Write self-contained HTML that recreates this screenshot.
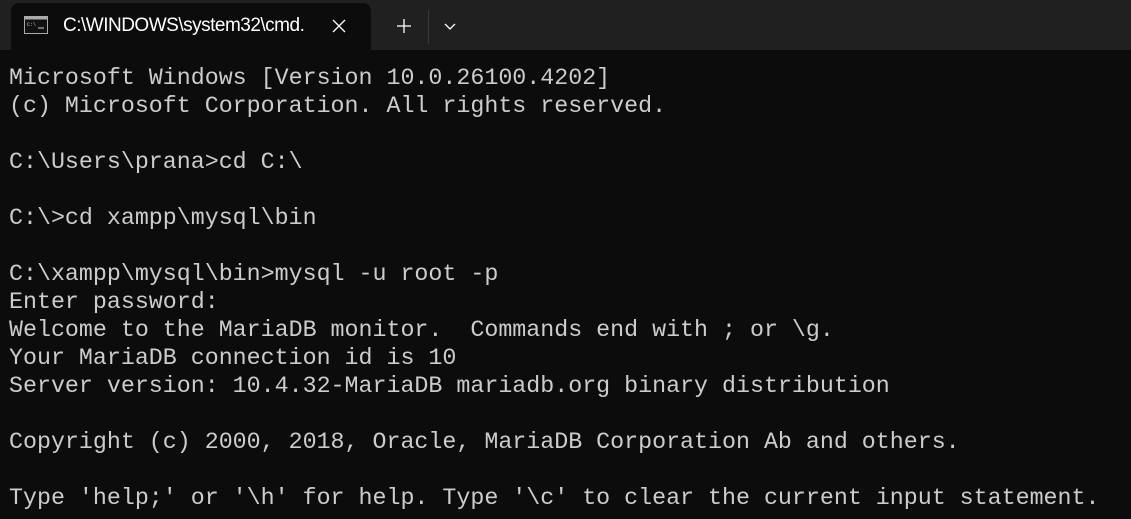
<!DOCTYPE html>
<html><head><style>
html,body{margin:0;padding:0;width:1131px;height:519px;overflow:hidden;background:#0c0c0c;}
.bar{position:absolute;left:0;top:0;width:1131px;height:50px;background:#202020;}
.tab{position:absolute;left:11px;top:3px;width:360px;height:47px;background:#0c0c0c;border-radius:8px 8px 0 0;}
.title{position:absolute;left:63px;top:15px;font:19px "Liberation Sans",sans-serif;color:#fff;letter-spacing:-0.5px;}
pre{position:absolute;left:9px;top:64px;margin:0;font:23.3px/28px "Liberation Mono",monospace;color:#cccccc;}
</style></head><body>
<div class="bar"></div>
<div class="tab"></div>
<svg style="position:absolute;left:24px;top:16px" width="24" height="18" viewBox="0 0 24 18">
<rect x="0.5" y="0.5" width="23" height="17" fill="#111" stroke="#aaa"/>
<rect x="0.5" y="0.5" width="23" height="3" fill="#aaa"/>
<text x="3" y="10" font-size="5" fill="#ccc" font-family="Liberation Mono">C:\</text>
<line x1="14" y1="12" x2="20" y2="12" stroke="#ccc"/>
</svg>
<div class="title">C:\WINDOWS\system32\cmd.</div>
<svg style="position:absolute;left:332px;top:19px" width="14" height="14"><path d="M1 1L13 13M13 1L1 13" stroke="#fff" stroke-width="1.3"/></svg>
<svg style="position:absolute;left:397px;top:19px" width="14" height="14"><path d="M7 0V14M0 7H14" stroke="#fff" stroke-width="1.3"/></svg>
<div style="position:absolute;left:428px;top:10px;width:1px;height:34px;background:#3a3a3a"></div>
<svg style="position:absolute;left:444px;top:23px" width="12" height="8"><path d="M1 1L6 6L11 1" stroke="#fff" stroke-width="1.3" fill="none"/></svg>
<pre>Microsoft Windows [Version 10.0.26100.4202]
(c) Microsoft Corporation. All rights reserved.

C:\Users\prana&gt;cd C:\

C:\&gt;cd xampp\mysql\bin

C:\xampp\mysql\bin&gt;mysql -u root -p
Enter password:
Welcome to the MariaDB monitor.  Commands end with ; or \g.
Your MariaDB connection id is 10
Server version: 10.4.32-MariaDB mariadb.org binary distribution

Copyright (c) 2000, 2018, Oracle, MariaDB Corporation Ab and others.

Type 'help;' or '\h' for help. Type '\c' to clear the current input statement.</pre>
</body></html>
